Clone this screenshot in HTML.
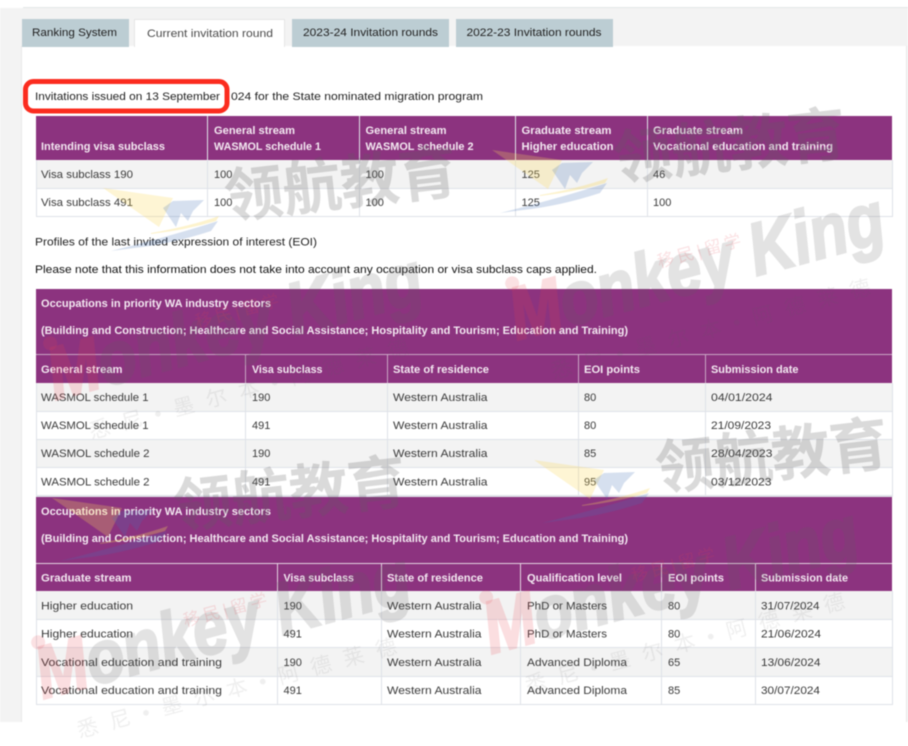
<!DOCTYPE html>
<html><head><meta charset="utf-8"><style>
html,body{margin:0;padding:0;background:#fff;width:908px;height:746px;overflow:hidden}
svg{display:block;filter:blur(.4px)}
text{font-family:"Liberation Sans","Noto Sans CJK SC",sans-serif;font-size:11px}
.t{fill:#222}.h{fill:#f3e8f1;font-weight:bold}.d{fill:#3a3a3a}
.w{font-size:59px;fill:rgba(95,95,95,.23);font-weight:bold}
.m{font-size:74px;font-weight:bold;font-style:italic;fill:#5f5f5f;stroke:#5f5f5f;stroke-width:2.5;opacity:.17}
.m .p{fill:#e8404c;stroke:#e8404c}
.s{font-size:17px;fill:rgba(230,70,80,.16)}
.l{font-size:21px;fill:rgba(95,95,95,.1)}
</style></head><body>
<svg width="908" height="746" viewBox="0 0 908 746" xmlns="http://www.w3.org/2000/svg" shape-rendering="crispEdges">
<rect x="0" y="8" width="908" height="714" fill="#f3f3f3"/>
<rect x="23" y="7" width="885" height="1" fill="#e3e8e8"/>
<rect x="21" y="46" width="886" height="676" fill="#e9e9e9"/>
<rect x="22" y="46" width="884" height="676" fill="#fff"/>

<rect x="22" y="19" width="107" height="28" fill="#bccdd3"/>
<rect x="134" y="19" width="151" height="28" fill="#e6e6e6"/>
<rect x="135" y="20" width="149" height="28" fill="#fff"/>
<rect x="292" y="19" width="157" height="28" fill="#bccdd3"/>
<rect x="456" y="19" width="157" height="28" fill="#bccdd3"/>
<text class="t" x="32" y="36" textLength="85" lengthAdjust="spacingAndGlyphs">Ranking System</text>
<text x="147" y="37" fill="#4a4a4a" textLength="126" lengthAdjust="spacingAndGlyphs">Current invitation round</text>
<text class="t" x="303" y="36" textLength="135" lengthAdjust="spacingAndGlyphs">2023-24 Invitation rounds</text>
<text class="t" x="466.5" y="36" textLength="135" lengthAdjust="spacingAndGlyphs">2022-23 Invitation rounds</text>

<rect x="25.5" y="81.5" width="201.5" height="29.5" rx="8" fill="#fff" stroke="#fb2c1f" stroke-width="5" shape-rendering="auto"/>
<text class="t" x="35" y="100" textLength="185" lengthAdjust="spacingAndGlyphs">Invitations issued on 13 September</text>
<text class="t" x="231" y="100" textLength="252" lengthAdjust="spacingAndGlyphs">024 for the State nominated migration program</text>

<!-- table 1 -->
<rect x="36" y="116" width="856" height="44" fill="#8c337f"/>
<rect x="36" y="160" width="856" height="28" fill="#f3f3f3"/>
<g fill="#dfe2e8"><rect x="36" y="160" width="1" height="57"/><rect x="892" y="160" width="1" height="57"/><rect x="36" y="188" width="857" height="1"/><rect x="36" y="216" width="857" height="1"/>
<rect x="207" y="116" width="1" height="100"/><rect x="359" y="116" width="1" height="100"/><rect x="515" y="116" width="1" height="100"/><rect x="647" y="116" width="1" height="100"/></g>
<text class="h" x="41" y="150" textLength="124" lengthAdjust="spacingAndGlyphs">Intending visa subclass</text>
<text class="h" x="214" y="134" textLength="81" lengthAdjust="spacingAndGlyphs">General stream</text>
<text class="h" x="214" y="150" textLength="107" lengthAdjust="spacingAndGlyphs">WASMOL schedule 1</text>
<text class="h" x="365.5" y="134" textLength="81" lengthAdjust="spacingAndGlyphs">General stream</text>
<text class="h" x="365.5" y="150" textLength="108" lengthAdjust="spacingAndGlyphs">WASMOL schedule 2</text>
<text class="h" x="521.5" y="134" textLength="90" lengthAdjust="spacingAndGlyphs">Graduate stream</text>
<text class="h" x="521.5" y="150" textLength="92" lengthAdjust="spacingAndGlyphs">Higher education</text>
<text class="h" x="653" y="134" textLength="90" lengthAdjust="spacingAndGlyphs">Graduate stream</text>
<text class="h" x="653" y="150" textLength="180" lengthAdjust="spacingAndGlyphs">Vocational education and training</text>
<text class="d" x="41" y="178" textLength="92" lengthAdjust="spacingAndGlyphs">Visa subclass 190</text>
<text class="d" x="214" y="178">100</text><text class="d" x="365.5" y="178">100</text><text class="d" x="521.5" y="178">125</text><text class="d" x="653" y="178">46</text>
<text class="d" x="41" y="206" textLength="92" lengthAdjust="spacingAndGlyphs">Visa subclass 491</text>
<text class="d" x="214" y="206">100</text><text class="d" x="365.5" y="206">100</text><text class="d" x="521.5" y="206">125</text><text class="d" x="653" y="206">100</text>

<text class="t" x="35" y="245.5" textLength="282" lengthAdjust="spacingAndGlyphs">Profiles of the last invited expression of interest (EOI)</text>
<text fill="#111" x="35" y="273" textLength="562" lengthAdjust="spacingAndGlyphs">Please note that this information does not take into account any occupation or visa subclass caps applied.</text>

<!-- table 2 -->
<rect x="36" y="289" width="856" height="94" fill="#8c337f"/>
<rect x="36" y="354" width="856" height="1" fill="#c9a6c4"/>
<rect x="36" y="383" width="856" height="28" fill="#f3f3f3"/>
<rect x="36" y="439" width="856" height="28" fill="#f3f3f3"/>
<g fill="#dfe2e8"><rect x="36" y="383" width="1" height="113"/><rect x="892" y="383" width="1" height="113"/><rect x="36" y="411" width="857" height="1"/><rect x="36" y="439" width="857" height="1"/><rect x="36" y="467" width="857" height="1"/><rect x="36" y="495" width="857" height="2"/>
<rect x="245" y="383" width="1" height="113"/><rect x="387" y="383" width="1" height="113"/><rect x="578" y="383" width="1" height="113"/><rect x="705" y="383" width="1" height="113"/></g>
<g fill="#c9a6c4"><rect x="245" y="355" width="1" height="28"/><rect x="387" y="355" width="1" height="28"/><rect x="578" y="355" width="1" height="28"/><rect x="705" y="355" width="1" height="28"/></g>
<text class="h" x="41" y="307" textLength="230" lengthAdjust="spacingAndGlyphs">Occupations in priority WA industry sectors</text>
<text class="h" x="41" y="334" textLength="587" lengthAdjust="spacingAndGlyphs">(Building and Construction; Healthcare and Social Assistance; Hospitality and Tourism; Education and Training)</text>
<text class="h" x="41" y="373" textLength="81.5" lengthAdjust="spacingAndGlyphs">General stream</text>
<text class="h" x="252" y="373" textLength="70.5" lengthAdjust="spacingAndGlyphs">Visa subclass</text>
<text class="h" x="393" y="373" textLength="96" lengthAdjust="spacingAndGlyphs">State of residence</text>
<text class="h" x="584" y="373" textLength="56" lengthAdjust="spacingAndGlyphs">EOI points</text>
<text class="h" x="711" y="373" textLength="87.5" lengthAdjust="spacingAndGlyphs">Submission date</text>

<text class="d" x="41" y="401" textLength="107.5" lengthAdjust="spacingAndGlyphs">WASMOL schedule 1</text><text class="d" x="252" y="401">190</text><text class="d" x="393" y="401" textLength="94.5" lengthAdjust="spacingAndGlyphs">Western Australia</text><text class="d" x="584" y="401">80</text><text class="d" x="711" y="401" textLength="61.5" lengthAdjust="spacingAndGlyphs">04/01/2024</text>
<text class="d" x="41" y="429" textLength="107.5" lengthAdjust="spacingAndGlyphs">WASMOL schedule 1</text><text class="d" x="252" y="429">491</text><text class="d" x="393" y="429" textLength="94.5" lengthAdjust="spacingAndGlyphs">Western Australia</text><text class="d" x="584" y="429">80</text><text class="d" x="711" y="429" textLength="60" lengthAdjust="spacingAndGlyphs">21/09/2023</text>
<text class="d" x="41" y="457" textLength="108.5" lengthAdjust="spacingAndGlyphs">WASMOL schedule 2</text><text class="d" x="252" y="457">190</text><text class="d" x="393" y="457" textLength="94.5" lengthAdjust="spacingAndGlyphs">Western Australia</text><text class="d" x="584" y="457">85</text><text class="d" x="711" y="457" textLength="61.5" lengthAdjust="spacingAndGlyphs">28/04/2023</text>
<text class="d" x="41" y="485.5" textLength="108.5" lengthAdjust="spacingAndGlyphs">WASMOL schedule 2</text><text class="d" x="252" y="485.5">491</text><text class="d" x="393" y="485.5" textLength="94.5" lengthAdjust="spacingAndGlyphs">Western Australia</text><text class="d" x="584" y="485.5">95</text><text class="d" x="711" y="485.5" textLength="60.5" lengthAdjust="spacingAndGlyphs">03/12/2023</text>

<!-- table 3 -->
<rect x="36" y="497" width="856" height="94" fill="#8c337f"/>
<rect x="36" y="563" width="856" height="1" fill="#e3d3e0"/>
<rect x="36" y="591" width="856" height="28" fill="#f3f3f3"/>
<rect x="36" y="648" width="856" height="28" fill="#f3f3f3"/>
<g fill="#dfe2e8"><rect x="36" y="591" width="1" height="114"/><rect x="892" y="591" width="1" height="114"/><rect x="36" y="619" width="857" height="1"/><rect x="36" y="647" width="857" height="1"/><rect x="36" y="676" width="857" height="1"/><rect x="36" y="704" width="857" height="1"/>
<rect x="277" y="591" width="1" height="113"/><rect x="381" y="591" width="1" height="113"/><rect x="520" y="591" width="1" height="113"/><rect x="661" y="591" width="1" height="113"/><rect x="755" y="591" width="1" height="113"/></g>
<g fill="#e3d3e0"><rect x="277" y="564" width="1" height="27"/><rect x="381" y="564" width="1" height="27"/><rect x="520" y="564" width="1" height="27"/><rect x="661" y="564" width="1" height="27"/><rect x="755" y="564" width="1" height="27"/></g>
<text class="h" x="41" y="515" textLength="230" lengthAdjust="spacingAndGlyphs">Occupations in priority WA industry sectors</text>
<text class="h" x="41" y="542" textLength="587" lengthAdjust="spacingAndGlyphs">(Building and Construction; Healthcare and Social Assistance; Hospitality and Tourism; Education and Training)</text>
<text class="h" x="41" y="581.5" textLength="90.5" lengthAdjust="spacingAndGlyphs">Graduate stream</text>
<text class="h" x="283.5" y="581.5" textLength="70.5" lengthAdjust="spacingAndGlyphs">Visa subclass</text>
<text class="h" x="387" y="581.5" textLength="96" lengthAdjust="spacingAndGlyphs">State of residence</text>
<text class="h" x="527" y="581.5" textLength="95" lengthAdjust="spacingAndGlyphs">Qualification level</text>
<text class="h" x="668" y="581.5" textLength="56" lengthAdjust="spacingAndGlyphs">EOI points</text>
<text class="h" x="761" y="581.5" textLength="87" lengthAdjust="spacingAndGlyphs">Submission date</text>

<text class="d" x="41" y="609.5" textLength="92" lengthAdjust="spacingAndGlyphs">Higher education</text><text class="d" x="283.5" y="609.5">190</text><text class="d" x="387" y="609.5" textLength="94.5" lengthAdjust="spacingAndGlyphs">Western Australia</text><text class="d" x="527" y="609.5" textLength="80" lengthAdjust="spacingAndGlyphs">PhD or Masters</text><text class="d" x="668" y="609.5">80</text><text class="d" x="761" y="609.5" textLength="58.5" lengthAdjust="spacingAndGlyphs">31/07/2024</text>
<text class="d" x="41" y="637.5" textLength="92" lengthAdjust="spacingAndGlyphs">Higher education</text><text class="d" x="283.5" y="637.5">491</text><text class="d" x="387" y="637.5" textLength="94.5" lengthAdjust="spacingAndGlyphs">Western Australia</text><text class="d" x="527" y="637.5" textLength="80" lengthAdjust="spacingAndGlyphs">PhD or Masters</text><text class="d" x="668" y="637.5">80</text><text class="d" x="761" y="637.5" textLength="60" lengthAdjust="spacingAndGlyphs">21/06/2024</text>
<text class="d" x="41" y="666" textLength="181" lengthAdjust="spacingAndGlyphs">Vocational education and training</text><text class="d" x="283.5" y="666">190</text><text class="d" x="387" y="666" textLength="94.5" lengthAdjust="spacingAndGlyphs">Western Australia</text><text class="d" x="527" y="666" textLength="100" lengthAdjust="spacingAndGlyphs">Advanced Diploma</text><text class="d" x="668" y="666">65</text><text class="d" x="761" y="666" textLength="59.5" lengthAdjust="spacingAndGlyphs">13/06/2024</text>
<text class="d" x="41" y="694" textLength="181" lengthAdjust="spacingAndGlyphs">Vocational education and training</text><text class="d" x="283.5" y="694">491</text><text class="d" x="387" y="694" textLength="94.5" lengthAdjust="spacingAndGlyphs">Western Australia</text><text class="d" x="527" y="694" textLength="100" lengthAdjust="spacingAndGlyphs">Advanced Diploma</text><text class="d" x="668" y="694">85</text><text class="d" x="761" y="694" textLength="59" lengthAdjust="spacingAndGlyphs">30/07/2024</text>

<!-- watermarks: sail logo + wordmark -->
<g shape-rendering="auto">
<g transform="translate(101,168)"><path d="M2 20 72 30 58 59Z" fill="rgba(250,215,90,.26)"/><path d="M72 33 103 32 92 43 87 53 80 45 75 59 62 40Z" fill="rgba(70,115,180,.22)"/><path d="M50 65Q90 58 118 48L115 53Q85 62 50 66Z" fill="rgba(250,215,90,.3)"/><path d="M10 83Q70 68 117 53L110 63Q70 76 33 80Z" fill="rgba(70,115,180,.22)"/></g>
<g transform="translate(490,130)"><path d="M2 20 72 30 58 59Z" fill="rgba(250,215,90,.26)"/><path d="M72 33 103 32 92 43 87 53 80 45 75 59 62 40Z" fill="rgba(70,115,180,.22)"/><path d="M50 65Q90 58 118 48L115 53Q85 62 50 66Z" fill="rgba(250,215,90,.3)"/><path d="M10 83Q70 68 117 53L110 63Q70 76 33 80Z" fill="rgba(70,115,180,.22)"/></g>
<g transform="translate(532,440)"><path d="M2 20 72 30 58 59Z" fill="rgba(250,215,90,.26)"/><path d="M72 33 103 32 92 43 87 53 80 45 75 59 62 40Z" fill="rgba(70,115,180,.22)"/><path d="M50 65Q90 58 118 48L115 53Q85 62 50 66Z" fill="rgba(250,215,90,.3)"/><path d="M10 83Q70 68 117 53L110 63Q70 76 33 80Z" fill="rgba(70,115,180,.22)"/></g>
<g transform="translate(50,478)"><path d="M2 20 72 30 58 59Z" fill="rgba(250,215,90,.26)"/><path d="M72 33 103 32 92 43 87 53 80 45 75 59 62 40Z" fill="rgba(70,115,180,.22)"/><path d="M50 65Q90 58 118 48L115 53Q85 62 50 66Z" fill="rgba(250,215,90,.3)"/><path d="M10 83Q70 68 117 53L110 63Q70 76 33 80Z" fill="rgba(70,115,180,.22)"/></g>

<text class="w" transform="translate(227,218) rotate(-6.5)" textLength="234">领航教育</text>
<text class="w" transform="translate(616,180) rotate(-6.5)" textLength="234">领航教育</text>
<text class="w" transform="translate(658,490) rotate(-6.5)" textLength="234">领航教育</text>
<text class="w" transform="translate(176,528) rotate(-6.5)" textLength="234">领航教育</text>

<g transform="translate(55,400) rotate(-15)"><text class="m" textLength="385" lengthAdjust="spacingAndGlyphs"><tspan class="p">M</tspan>onkey King</text><circle cx="10" cy="-56" r="7" fill="rgba(230,70,80,.16)"/><text class="s" x="156" y="-33" textLength="86">移民|留学</text><text class="l" x="25" y="47" textLength="330">悉尼•墨尔本•阿德莱德</text></g>
<g transform="translate(517,340) rotate(-15)"><text class="m" textLength="385" lengthAdjust="spacingAndGlyphs"><tspan class="p">M</tspan>onkey King</text><circle cx="10" cy="-56" r="7" fill="rgba(230,70,80,.16)"/><text class="s" x="156" y="-33" textLength="86">移民|留学</text><text class="l" x="25" y="47" textLength="330">悉尼•墨尔本•阿德莱德</text></g>
<g transform="translate(43,699) rotate(-15)"><text class="m" textLength="385" lengthAdjust="spacingAndGlyphs"><tspan class="p">M</tspan>onkey King</text><circle cx="10" cy="-56" r="7" fill="rgba(230,70,80,.16)"/><text class="s" x="156" y="-33" textLength="86">移民|留学</text><text class="l" x="25" y="47" textLength="330">悉尼•墨尔本•阿德莱德</text></g>
<g transform="translate(491,654) rotate(-15)"><text class="m" textLength="385" lengthAdjust="spacingAndGlyphs"><tspan class="p">M</tspan>onkey King</text><circle cx="10" cy="-56" r="7" fill="rgba(230,70,80,.16)"/><text class="s" x="156" y="-33" textLength="86">移民|留学</text><text class="l" x="25" y="47" textLength="330">悉尼•墨尔本•阿德莱德</text></g>
</g>
</svg>
</body></html>
